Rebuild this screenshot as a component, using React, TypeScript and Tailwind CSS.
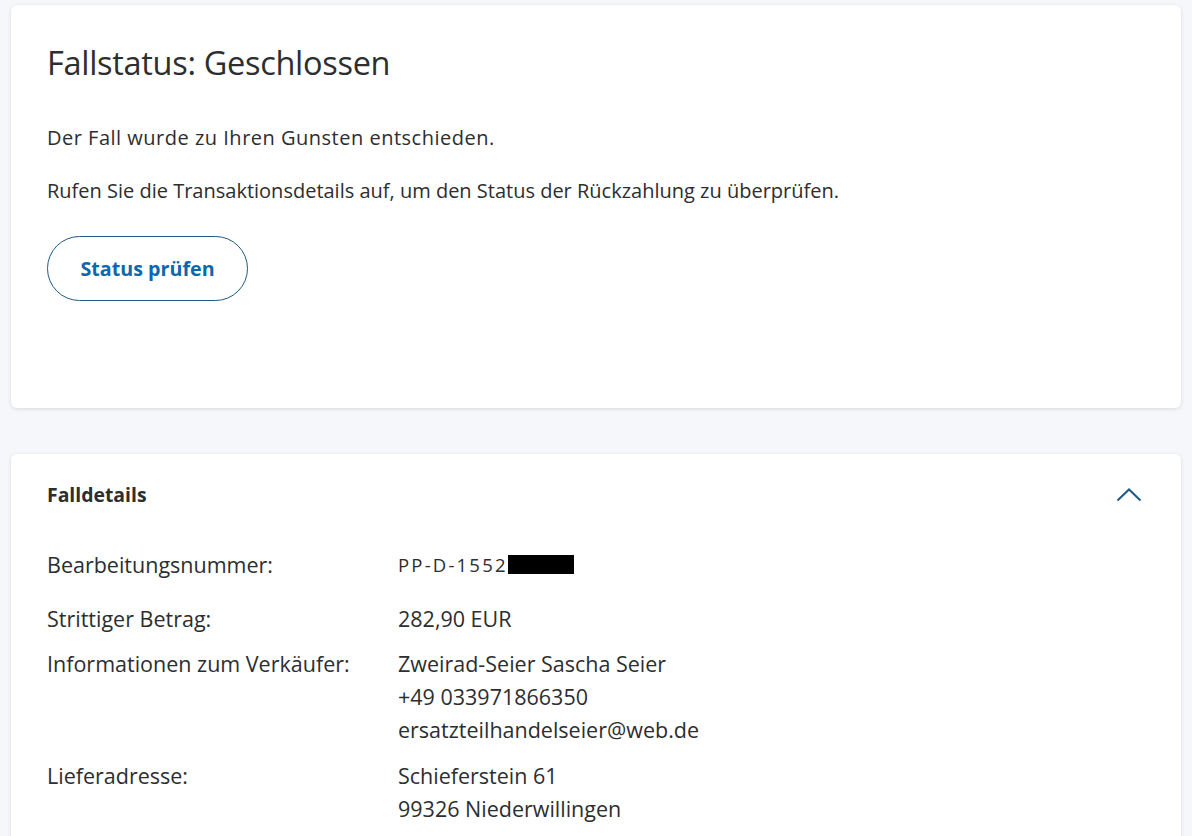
import React from "react";

const font = { fontFamily: "'Open Sans', 'Noto Sans', sans-serif" };

export default function App() {
  return (
    <div className="min-h-[836px] w-[1192px] bg-[#f5f7fa] px-[11px] pt-[5px] text-[#2c2e2f] overflow-hidden" style={font}>
      <div className="bg-white rounded-[6px] shadow-[0_1px_4px_rgba(0,0,0,0.12)] px-[36px] pt-[38px] h-[403px]">
        <h1 className="text-[32.5px] leading-[40px] font-normal tracking-[-0.3px]">Fallstatus: Geschlossen</h1>
        <p className="mt-[43px] text-[20px] leading-[24px] tracking-[0.5px]">Der Fall wurde zu Ihren Gunsten entschieden.</p>
        <p className="mt-[29px] text-[20px] leading-[24px]">Rufen Sie die Transaktionsdetails auf, um den Status der Rückzahlung zu überprüfen.</p>
        <button className="mt-[33px] w-[201px] h-[65px] rounded-full border border-[#1d5a85] text-[#0c68ad] text-[19.7px] font-bold">
          Status prüfen
        </button>
      </div>
      <div className="mt-[46px] bg-white rounded-t-[6px] shadow-[0_1px_4px_rgba(0,0,0,0.12)] px-[36px] pt-[26px] h-[400px]">
        <div className="flex items-center justify-between h-[30px]">
          <h2 className="text-[19.4px] font-bold">Falldetails</h2>
          <svg width="26" height="14" viewBox="0 0 26 14" className="mr-[3px]">
            <path d="M1.5 12.5 L13 1.5 L24.5 12.5" fill="none" stroke="#1d5a85" strokeWidth="2" />
          </svg>
        </div>
        <div className="mt-[38px] grid grid-cols-[351px_1fr] text-[21.5px] leading-[33px]">
          <div>Bearbeitungsnummer:</div>
          <div className="flex items-center">
            <span className="tracking-[2.2px] text-[18.5px]">PP-D-1552</span>
            <span className="inline-block w-[66px] h-[19px] bg-black"></span>
          </div>
          <div className="mt-[21px]">Strittiger Betrag:</div>
          <div className="mt-[21px]">282,90 EUR</div>
          <div className="mt-[12px]">Informationen zum Verkäufer:</div>
          <div className="mt-[12px]">
            <div>Zweirad-Seier Sascha Seier</div>
            <div>+49 033971866350</div>
            <div>ersatzteilhandelseier@web.de</div>
          </div>
          <div className="mt-[13px]">Lieferadresse:</div>
          <div className="mt-[13px]">
            <div>Schieferstein 61</div>
            <div>99326 Niederwillingen</div>
          </div>
        </div>
      </div>
    </div>
  );
}
